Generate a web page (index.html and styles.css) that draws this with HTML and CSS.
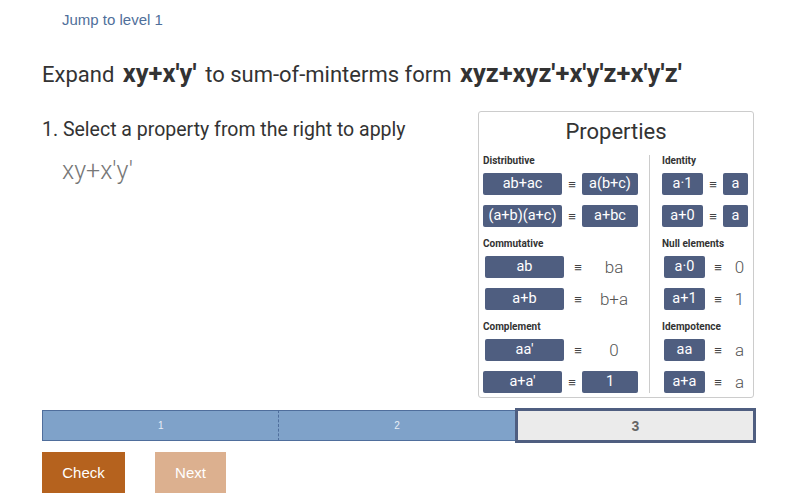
FILE: index.html
```html
<!DOCTYPE html>
<html>
<head>
<meta charset="utf-8">
<link rel="stylesheet" href="styles.css">
</head>
<body>
<div class="page">
  <div class="jump">Jump to level 1</div>
  <h1 class="title">Expand <b class="expr">xy+x'y'</b> to sum-of-minterms form <b class="expr">xyz+xyz'+x'y'z+x'y'z'</b></h1>
  <div class="main">
    <div class="steps">
      <div class="step">1. Select a property from the right to apply</div>
      <div class="current">xy+x'y'</div>
    </div>
    <div class="props">
      <div class="props-title">Properties</div>
      <div class="props-cols">
        <div class="col col-left">
          <div class="group">Distributive</div>
          <div class="row row-first"><span class="chip w79">ab+ac</span><span class="eq e20">≡</span><span class="chip w56">a(b+c)</span></div>
          <div class="row"><span class="chip w79">(a+b)(a+c)</span><span class="eq e20">≡</span><span class="chip w56">a+bc</span></div>
          <div class="group">Commutative</div>
          <div class="row row-first shift"><span class="chip w79">ab</span><span class="eq e28">≡</span><span class="val v44">ba</span></div>
          <div class="row shift"><span class="chip w79">a+b</span><span class="eq e28">≡</span><span class="val v44">b+a</span></div>
          <div class="group">Complement</div>
          <div class="row row-first shift"><span class="chip w79">aa'</span><span class="eq e28">≡</span><span class="val v44">0</span></div>
          <div class="row"><span class="chip w79">a+a'</span><span class="eq e20">≡</span><span class="chip w56">1</span></div>
        </div>
        <div class="col col-right">
          <div class="group">Identity</div>
          <div class="row row-first"><span class="chip w41">a·1</span><span class="eq e20">≡</span><span class="chip w25">a</span></div>
          <div class="row"><span class="chip w41">a+0</span><span class="eq e20">≡</span><span class="chip w25">a</span></div>
          <div class="group">Null elements</div>
          <div class="row row-first shift"><span class="chip w41">a·0</span><span class="eq e26">≡</span><span class="val v17">0</span></div>
          <div class="row shift"><span class="chip w41">a+1</span><span class="eq e26">≡</span><span class="val v17">1</span></div>
          <div class="group">Idempotence</div>
          <div class="row row-first shift"><span class="chip w41">aa</span><span class="eq e26">≡</span><span class="val v17">a</span></div>
          <div class="row shift"><span class="chip w41">a+a</span><span class="eq e26">≡</span><span class="val v17">a</span></div>
        </div>
      </div>
    </div>
  </div>
  <div class="progress">
    <div class="seg seg-done seg-1">1</div>
    <div class="seg seg-done seg-2">2</div>
    <div class="seg seg-current">3</div>
  </div>
  <div class="buttons">
    <button class="btn btn-check">Check</button>
    <button class="btn btn-next">Next</button>
  </div>
</div>
</body>
</html>
```

FILE: styles.css
```css
* { box-sizing: border-box; }
body {
  margin: 0;
  font-family: Roboto, "Liberation Sans", sans-serif;
  color: #333;
  background: #fff;
}
.page {
  padding: 0 47px 0 42px;
}
.jump {
  font-family: "Liberation Sans", Arial, sans-serif;
  font-size: 15px;
  line-height: 18px;
  color: #4f6f9a;
  padding-top: 11px;
  margin-left: 20px;
}
.title {
  margin: 29px 0 0;
  font-size: 22px;
  font-weight: 400;
  line-height: 30px;
  color: #333;
  white-space: nowrap;
}
.expr {
  font-weight: 700;
  margin: 0 3px;
  font-size: 25.5px;
}
.main {
  display: flex;
  justify-content: space-between;
  margin-top: 21px;
  margin-right: 2px;
}
.steps {
  padding-top: 6px;
}
.step {
  font-size: 19.5px;
  line-height: 26px;
  color: #333;
}
.current {
  margin-left: 20px;
  margin-top: 13px;
  font-size: 25px;
  line-height: 30px;
  font-weight: 300;
  color: #777;
}
.props {
  width: 276px;
  border: 1px solid #ccc;
  border-radius: 3px;
  padding: 0 0 4px 4px;
}
.props-title {
  text-align: center;
  font-size: 22px;
  line-height: 36px;
  padding-top: 2px;
  color: #333;
  margin-bottom: 5px;
  margin-left: -4px;
}
.props-cols {
  display: flex;
}
.col-left {
  width: 167px;
  border-right: 1px solid #ccc;
}
.col-right {
  padding-left: 12px;
}
.group {
  font-size: 10px;
  font-weight: 700;
  line-height: 12px;
  color: #333;
  margin-top: 11px;
}
.col .group:first-child {
  margin-top: 0;
}
.row {
  display: flex;
  align-items: center;
  height: 22px;
  margin-top: 10px;
}
.row-first {
  margin-top: 6px;
}
.shift {
  padding-left: 2px;
}
.chip {
  display: block;
  height: 22px;
  line-height: 22px;
  background: #4f5e80;
  color: #fff;
  font-size: 14.5px;
  text-align: center;
  border-radius: 2px;
  white-space: nowrap;
}
.w79 { width: 79px; }
.w56 { width: 56px; }
.w41 { width: 41px; }
.w25 { width: 25px; }
.eq {
  display: block;
  text-align: center;
  font-size: 13px;
  color: #444;
}
.e20 { width: 20px; }
.e26 { width: 26px; }
.e28 { width: 28px; }
.val {
  display: block;
  text-align: center;
  font-size: 17px;
  font-weight: 300;
  color: #555;
}
.v44 { width: 44px; }
.v17 { width: 17px; }
.progress {
  display: flex;
  align-items: center;
  height: 35px;
  margin-top: 10px;
}
.seg {
  flex: 1 1 0;
  height: 31px;
  display: flex;
  align-items: center;
  justify-content: center;
  font-family: "Liberation Sans", Arial, sans-serif;
}
.seg-done {
  background: #7fa2c9;
  border-top: 1px solid #4f6e9c;
  border-bottom: 1px solid #4f6e9c;
  color: #e8eef6;
  font-size: 10px;
}
.seg-1 {
  border-left: 1px solid #4f6e9c;
  border-right: 1px dashed #4f6e9c;
}
.seg-current {
  height: 35px;
  background: #ebebeb;
  border: 3px solid #4f5e80;
  color: #666;
  font-size: 14px;
  font-weight: 700;
}
.buttons {
  display: flex;
  gap: 30px;
  margin-top: 9px;
}
.btn {
  border: 0;
  height: 41px;
  color: #fff;
  font-family: "Liberation Sans", Arial, sans-serif;
  font-size: 15px;
  padding: 0;
}
.btn-check {
  width: 83px;
  background: #b5621e;
}
.btn-next {
  width: 71px;
  background: #dcb08f;
}
```
